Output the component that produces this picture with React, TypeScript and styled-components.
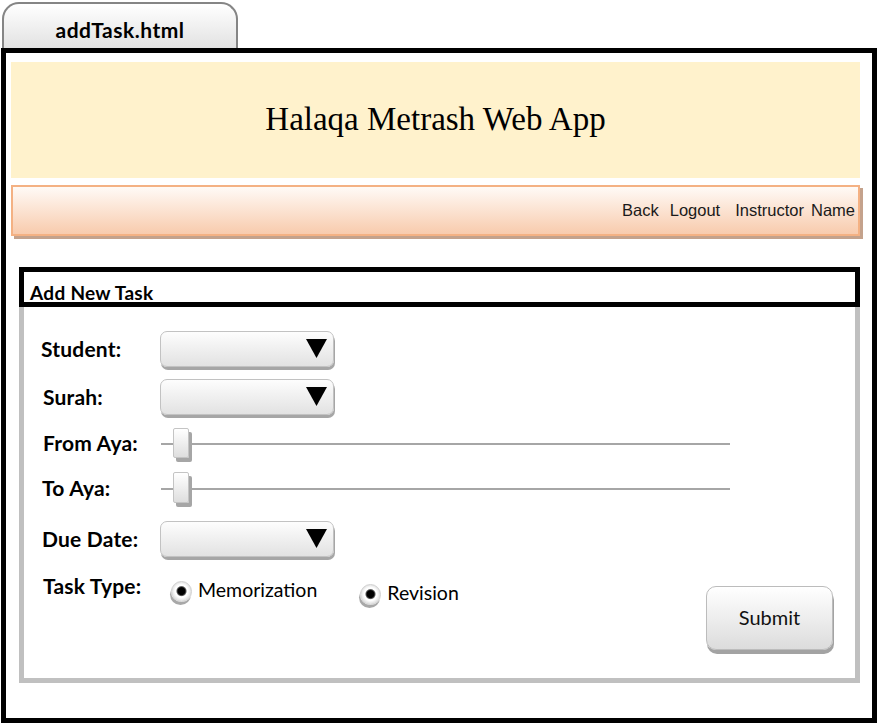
import { FC } from 'react';
import styled, { createGlobalStyle } from 'styled-components';

const GlobalStyle = createGlobalStyle`
  html, body {
    margin: 0;
    padding: 0;
    background: #fff;
  }

  body {
    font-family: Lato, "Open Sans", sans-serif;
    color: #000;
    width: 878px;
    height: 723px;
    overflow: hidden;
  }

  * {
    box-sizing: border-box;
  }
`;

const Caret: FC = () => (
  <svg width="21" height="19" viewBox="0 0 21 19">
    <polygon points="0,0 21,0 10.5,19" fill="#000" />
  </svg>
);

const Select: FC = () => (
  <Dropdown>
    <Caret />
  </Dropdown>
);

const Slider: FC<{ $thumbHeight: number }> = ({ $thumbHeight }) => (
  <Track>
    <Thumb $height={$thumbHeight} />
  </Track>
);

export default function App() {
  return (
    <>
      <GlobalStyle />
      <Page>
        <Tab>addTask.html</Tab>
        <Frame>
          <Banner>Halaqa Metrash Web App</Banner>
          <NavBar>
            <NavLink>Back</NavLink>
            <NavLink $gap={11}>Logout</NavLink>
            <NavLink $gap={15}>Instructor</NavLink>
            <NavLink $gap={7}>Name</NavLink>
          </NavBar>
          <Panel>
            <PanelTitle>Add New Task</PanelTitle>
            <PanelBody>
              <Row $top={0} $height={40}>
                <Label>Student:</Label>
                <Select />
              </Row>
              <Row $top={8} $height={40} $shift={2}>
                <Label>Surah:</Label>
                <Select />
              </Row>
              <Row $top={7} $height={37} $shift={2}>
                <Label>From Aya:</Label>
                <Slider $thumbHeight={30} />
              </Row>
              <Row $top={8} $height={37} $shift={1}>
                <Label>To Aya:</Label>
                <Slider $thumbHeight={31} />
              </Row>
              <Row $top={13} $height={40} $shift={1}>
                <Label>Due Date:</Label>
                <Select />
              </Row>
              <TypeRow>
                <TypeLabel>Task Type:</TypeLabel>
                <RadioOption $top={4} $left={10}>
                  <Radio />
                  Memorization
                </RadioOption>
                <RadioOption $top={7} $left={43}>
                  <Radio />
                  Revision
                </RadioOption>
                <SubmitButton>Submit</SubmitButton>
              </TypeRow>
            </PanelBody>
          </Panel>
        </Frame>
      </Page>
    </>
  );
}

const Page = styled.div`
  padding: 2px 0 0 1px;
`;

const Tab = styled.div`
  margin-left: 1px;
  width: 236px;
  height: 46px;
  padding-top: 7px;
  border: 2px solid #858585;
  border-bottom: none;
  border-radius: 17px 17px 0 0;
  background: linear-gradient(#ffffff, #e2e2e2);
  display: flex;
  align-items: center;
  justify-content: center;
  font-size: 21px;
  font-weight: bold;
  letter-spacing: 0.5px;
`;

const Frame = styled.div`
  width: 876px;
  border: 5px solid #000;
  padding: 9px 12px 35px 5px;
`;

const Banner = styled.div`
  height: 116px;
  background: #fff2cc;
  display: flex;
  align-items: center;
  justify-content: center;
  padding-bottom: 1px;
  font-family: "Liberation Serif", "Times New Roman", serif;
  font-size: 33px;
`;

const NavBar = styled.div`
  margin-top: 7px;
  height: 51px;
  border: 2px solid #f4b183;
  background: linear-gradient(#fffaf6, #f8cbad);
  box-shadow: 3px 3px 0 #c4a28c;
  display: flex;
  align-items: center;
  justify-content: flex-end;
  padding: 0 3px 0 0;
  font-family: "Liberation Sans", Arial, sans-serif;
  font-size: 16.5px;
  color: #1a1a1a;
`;

const NavLink = styled.span<{ $gap?: number }>`
  margin-left: ${({ $gap = 0 }) => $gap}px;
`;

const Panel = styled.div`
  margin: 31px 0 0 8px;
  width: 841px;
`;

const PanelTitle = styled.div`
  height: 40px;
  border: 5px solid #000;
  padding: 10px 0 0 6px;
  display: flex;
  align-items: center;
  font-size: 19px;
  font-weight: bold;
  letter-spacing: 0.3px;
`;

const PanelBody = styled.div`
  height: 376px;
  border: 5px solid #c0c0c0;
  border-top: none;
  padding: 23px 0 0 17px;
`;

const Row = styled.div<{ $top: number; $height: number; $shift?: number }>`
  margin-top: ${({ $top }) => $top}px;
  height: ${({ $height }) => $height}px;
  display: grid;
  grid-template-columns: ${({ $shift = 0 }) => 120 - $shift}px 1fr;
  align-items: center;
  padding-left: ${({ $shift = 0 }) => $shift}px;
`;

const Label = styled.div`
  font-size: 21px;
  font-weight: bold;
  letter-spacing: 0.2px;
  padding-bottom: 3px;
`;

const Dropdown = styled.div`
  width: 174px;
  height: 36px;
  margin: 0 0 3px -1px;
  border: 1px solid #c2c2c2;
  border-radius: 7px;
  background: linear-gradient(#fdfdfd, #e2e2e2);
  box-shadow: 1px 3px 0 #a6a6a6;
  display: flex;
  align-items: center;
  justify-content: flex-end;
  padding-right: 6px;
`;

const Track = styled.div`
  position: relative;
  width: 569px;
  height: 2px;
  background: #a6a6a6;
`;

const Thumb = styled.div<{ $height: number }>`
  position: absolute;
  left: 12px;
  top: ${({ $height }) => -Math.round($height / 2)}px;
  width: 16px;
  height: ${({ $height }) => $height}px;
  border: 1px solid #c4c4c4;
  border-radius: 2px;
  background: linear-gradient(#ffffff, #dedede);
  box-shadow: 3px 4px 0 #a6a6a6;
`;

const TypeRow = styled.div`
  margin-top: 14px;
  display: flex;
  align-items: flex-start;
`;

const TypeLabel = styled(Label)`
  width: 120px;
  padding: 0 0 0 2px;
  line-height: 24px;
`;

const RadioOption = styled.label<{ $top: number; $left: number }>`
  margin: ${({ $top }) => $top}px 0 0 ${({ $left }) => $left}px;
  display: flex;
  align-items: center;
  gap: 6px;
  font-size: 19.5px;
  line-height: 24px;
`;

const Radio = styled.span`
  width: 21px;
  height: 21px;
  margin-top: 2px;
  border-radius: 50%;
  border: 1px solid #d0d0d0;
  background: radial-gradient(
    circle at 50% 48%,
    #000 0 3.5px,
    #555 4.5px,
    #ffffff 5.5px 6.5px,
    #e6e6e6 9px
  );
  box-shadow: -1px 3px 0 #a8a8a8;
`;

const SubmitButton = styled.button`
  margin: 12px 22px 0 auto;
  width: 127px;
  height: 64px;
  border: 1px solid #bcbcbc;
  border-radius: 10px;
  background: linear-gradient(#ffffff, #dcdcdc);
  box-shadow: 1px 4px 0 #a3a3a3;
  font-family: Lato, "Open Sans", sans-serif;
  font-size: 20px;
  color: #111;
  padding: 0 0 2px;
`;
